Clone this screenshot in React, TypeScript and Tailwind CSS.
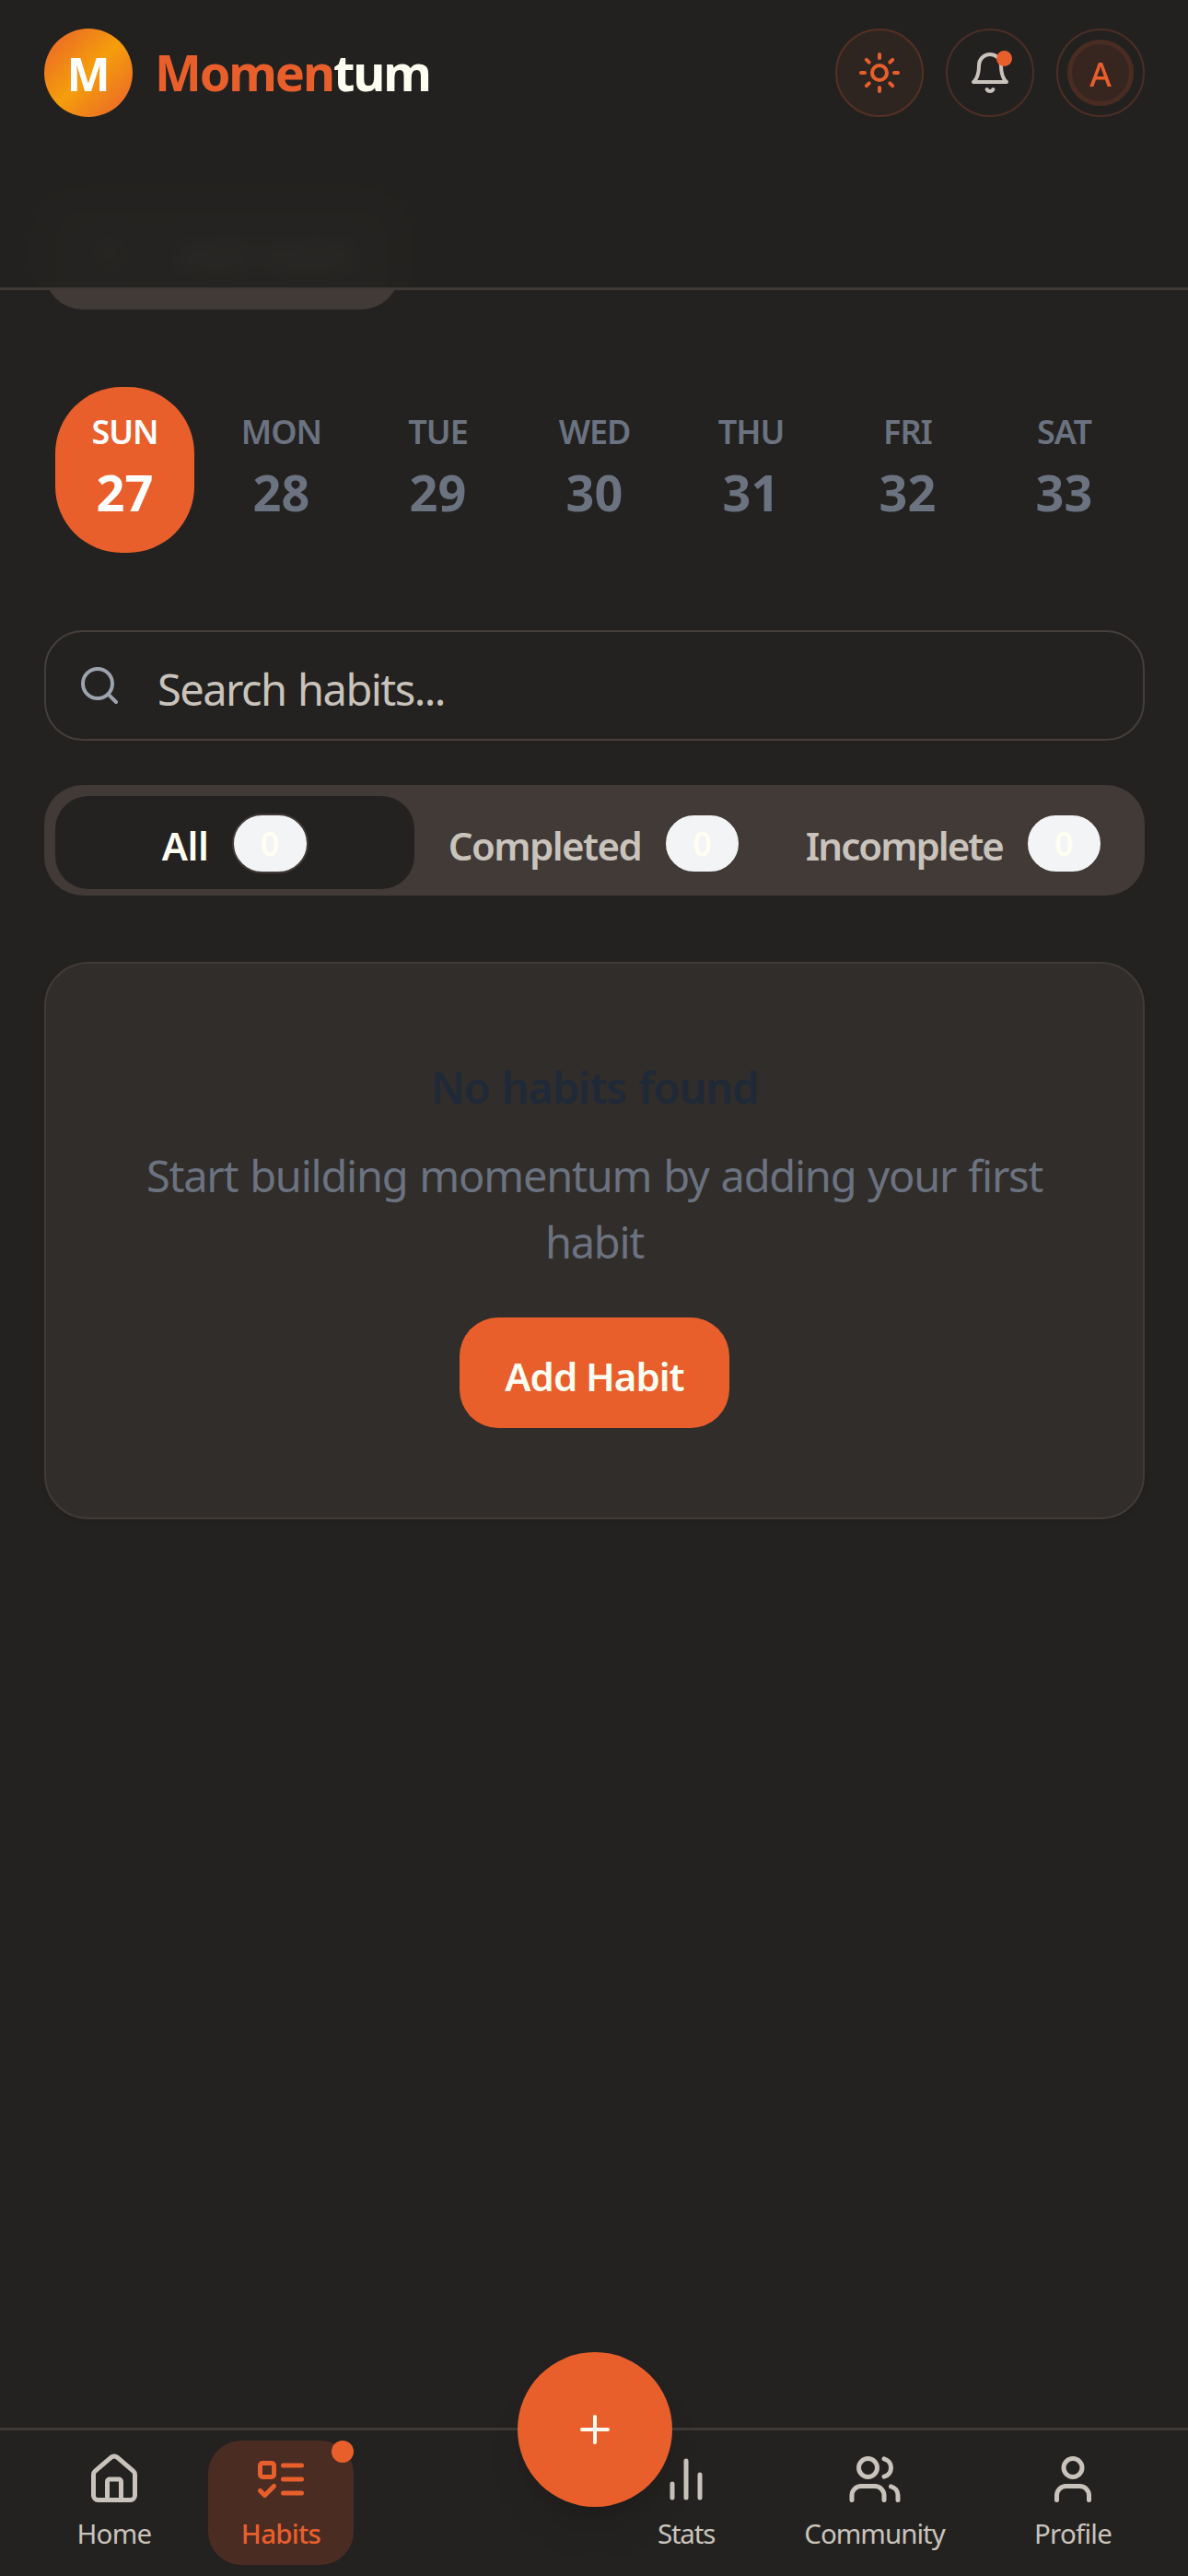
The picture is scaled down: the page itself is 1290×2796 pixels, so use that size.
import type { ReactNode } from 'react';

type IconProps = { className?: string; children: ReactNode };

function Icon({ className = 'size-12', children }: IconProps) {
  return (
    <svg
      viewBox="0 0 24 24"
      fill="none"
      stroke="currentColor"
      strokeWidth={2}
      strokeLinecap="round"
      strokeLinejoin="round"
      className={`shrink-0 ${className}`}
    >
      {children}
    </svg>
  );
}

const plusPaths = <path d="M5 12h14M12 5v14" />;

function Header() {
  return (
    <header className="absolute inset-x-0 top-0 z-10 flex h-[315px] items-start justify-between border-b-3 border-[#3f3936] bg-[#232220]/95 pt-[31px] pr-[47px] pl-12 backdrop-blur-[12px]">
      <div className="flex h-24 items-center gap-[24px]">
        <div className="flex size-24 items-center justify-center rounded-full bg-[linear-gradient(135deg,#e95f2c,#f59e0b_50%,#e95f2c)] text-[50px] leading-none font-bold text-white">
          <span className="pt-0.5">M</span>
        </div>
        <div className="pb-[3px] text-[54px] leading-[72px] font-bold tracking-[-2.15px] text-[#fffef2]">
          <span className="text-[#e95f2c]">Momen</span>tum
        </div>
      </div>
      <div className="flex gap-6">
        <button className="flex size-24 items-center justify-center rounded-full border-2 border-[#563024] bg-[#2f2520] text-[#e95f2c]">
          <Icon>
            <circle cx="12" cy="12" r="4" />
            <path d="M12 2v2M12 20v2M4.93 4.93l1.41 1.41M17.66 17.66l1.41 1.41M2 12h2M20 12h2M6.34 17.66l-1.41 1.41M19.07 4.93l-1.41 1.41" />
          </Icon>
        </button>
        <button className="relative flex size-24 items-center justify-center rounded-full border-2 border-[#4d2e25] text-[#c9c3bc]">
          <Icon>
            <path d="M6 8a6 6 0 0 1 12 0c0 7 3 9 3 9H3s3-2 3-9" />
            <path d="M10.3 21a1.94 1.94 0 0 0 3.4 0" />
          </Icon>
          <span className="absolute top-[22px] right-[22px] size-[17px] rounded-full bg-[#e95f2c]" />
        </button>
        <button className="flex size-24 items-center justify-center rounded-full border-2 border-[#4d2e25]">
          <span className="flex size-[72px] items-center justify-center rounded-full border-[5px] border-[#4a2c23] bg-[#372620] pt-[3px] text-4xl font-medium text-[#e95f2c]">
            A
          </span>
        </button>
      </div>
    </header>
  );
}

const days = [
  ['SUN', 27],
  ['MON', 28],
  ['TUE', 29],
  ['WED', 30],
  ['THU', 31],
  ['FRI', 32],
  ['SAT', 33],
] as const;

function WeekStrip() {
  return (
    <div className="mt-[84px] grid grid-cols-7 gap-[19px] px-3">
      {days.map(([name, date], i) => (
        <button
          key={name}
          className={`flex h-[180px] flex-col items-center rounded-[72px] pt-[25px] ${
            i === 0 ? 'bg-[#e95f2c] text-white' : 'text-[#6b7280]'
          }`}
        >
          <span className="text-4xl leading-[48px] font-semibold tracking-[-1px]">{name}</span>
          <span className="mt-[11px] text-[54px] leading-[60px] font-bold">{date}</span>
        </button>
      ))}
    </div>
  );
}

function Search() {
  return (
    <div className="mt-[84px] flex h-[120px] items-center gap-[39px] rounded-[42px] border-2 border-[#453e3b] pl-[34px]">
      <Icon className="size-12 text-[#9ca3af]">
        <circle cx="11" cy="11" r="8" />
        <path d="m21 21-4.3-4.3" />
      </Icon>
      <span className="pt-[8px] text-[47px] tracking-[-1.55px] text-[#c9c3bc] [word-spacing:2px]">Search habits...</span>
    </div>
  );
}

const tabs = [
  { label: 'All', style: 'bg-[#232220] text-[#fffef2]', text: 'tracking-[-0.4px]' },
  { label: 'Completed', style: 'text-[#c9c3bc]', text: 'tracking-[-1.6px]' },
  { label: 'Incomplete', style: 'text-[#c9c3bc]', text: 'tracking-[-2px]' },
];

function Tabs() {
  return (
    <div className="mt-12 grid h-[120px] grid-cols-3 rounded-[42px] bg-[#413a37] p-3">
      {tabs.map((tab) => (
        <button
          key={tab.label}
          className={`flex h-[101px] items-center justify-center gap-[25px] rounded-[36px] ${tab.style}`}
        >
          <span className={`pt-[7px] text-[42px] leading-[60px] font-semibold ${tab.text}`}>{tab.label}</span>
          <span className="mt-0.5 flex h-[65px] w-[83px] items-center justify-center rounded-full border-2 border-[#413a37] bg-[#f3f4f6] text-4xl leading-[48px] font-semibold text-[#fffef2]">
            0
          </span>
        </button>
      ))}
    </div>
  );
}

function EmptyState() {
  return (
    <section className="mt-[72px] flex h-[605px] flex-col items-center rounded-[48px] border-2 border-[#423b38] bg-[#312d2a] px-20 pt-[98px] text-center shadow-[0_3px_6px_rgba(0,0,0,0.06)]">
      <h3 className="text-[47px] leading-[72px] font-semibold tracking-[-1.15px] text-[#1f2937] [word-spacing:2px]">
        No habits found
      </h3>
      <p className="mt-[24px] text-[47px] leading-[72px] tracking-[-1.25px] text-[#6b7280] [word-spacing:2px]">
        Start building momentum by adding your first
        <br />
        habit
      </p>
      <button className="mt-[46px] flex h-[120px] w-[293px] shrink-0 items-center justify-center rounded-[42px] bg-[#e95f2c] pt-[7px] text-[42px] font-semibold tracking-[-1px] text-[#fffef2]">
        Add Habit
      </button>
    </section>
  );
}

type NavItemProps = { label: string; className: string; textClass: string; children: ReactNode; active?: boolean };

function NavItem({ label, className, textClass, children, active }: NavItemProps) {
  return (
    <button
      className={`relative flex h-[135px] flex-col items-center rounded-[36px] pt-3 ${className} ${
        active ? 'bg-[#4a2c23] text-[#e95f2c]' : 'text-[#c9c3bc]'
      }`}
    >
      <Icon className="size-[60px]">{children}</Icon>
      <span className={`mt-[9px] text-[29.5px] leading-[40px] ${textClass}`}>{label}</span>
      {active && <span className="absolute top-0 right-0 size-6 rounded-full bg-[#e95f2c]" />}
    </button>
  );
}

function BottomNav() {
  return (
    <nav className="relative flex h-[161px] shrink-0 border-t-3 border-[#3f3936] pt-[11px] pl-12">
      <NavItem label="Home" className="w-[152px]" textClass="tracking-[-0.7px]">
        <path d="M15 21v-8a1 1 0 0 0-1-1h-4a1 1 0 0 0-1 1v8" />
        <path d="M3 10a2 2 0 0 1 .709-1.528l7-5.999a2 2 0 0 1 2.582 0l7 5.999A2 2 0 0 1 21 10v9a2 2 0 0 1-2 2H5a2 2 0 0 1-2-2z" />
      </NavItem>
      <NavItem label="Habits" className="ml-[26px] w-[158px]" textClass="font-medium tracking-[-0.75px]" active>
        <rect x="3" y="5" width="6" height="6" rx="1" />
        <path d="m3 17 2 2 4-4M13 6h8M13 12h8M13 18h8" />
      </NavItem>
      <NavItem label="Stats" className="ml-[294px] w-[134px]" textClass="tracking-[-1.2px]">
        <path d="M18 20V10M12 20V4M6 20v-6" />
      </NavItem>
      <NavItem label="Community" className="ml-[25px] w-[225px]" textClass="tracking-[-1px]">
        <path d="M16 21v-2a4 4 0 0 0-4-4H6a4 4 0 0 0-4 4v2" />
        <circle cx="9" cy="7" r="4" />
        <path d="M22 21v-2a4 4 0 0 0-3-3.87M16 3.13a4 4 0 0 1 0 7.75" />
      </NavItem>
      <NavItem label="Profile" className="ml-[26px] w-[154px]" textClass="tracking-[-0.75px]">
        <path d="M19 21v-2a4 4 0 0 0-4-4H9a4 4 0 0 0-4 4v2" />
        <circle cx="12" cy="7" r="4" />
      </NavItem>
      <button className="absolute -top-[85px] left-[562px] flex size-[168px] items-center justify-center rounded-full bg-[#e95f2c] text-[#fffef2] shadow-[0_30px_45px_-9px_rgba(0,0,0,0.1),0_12px_18px_-12px_rgba(0,0,0,0.1)]">
        <Icon>{plusPaths}</Icon>
      </button>
    </nav>
  );
}

export default function App() {
  return (
    <div className="relative flex h-[2796px] w-[1290px] flex-col overflow-hidden bg-[#232220] font-['Noto_Sans',sans-serif]">
      <Header />
      <main className="flex-1 pt-[216px] pr-[47px] pl-12">
        <button className="flex h-[120px] w-[386px] items-center gap-12 rounded-[42px] bg-[#413a37] px-12 text-[42px] font-medium tracking-[-0.7px] whitespace-nowrap text-[#fffef2]">
          <Icon>{plusPaths}</Icon>
          Add Habit
        </button>
        <WeekStrip />
        <Search />
        <Tabs />
        <EmptyState />
      </main>
      <BottomNav />
    </div>
  );
}
